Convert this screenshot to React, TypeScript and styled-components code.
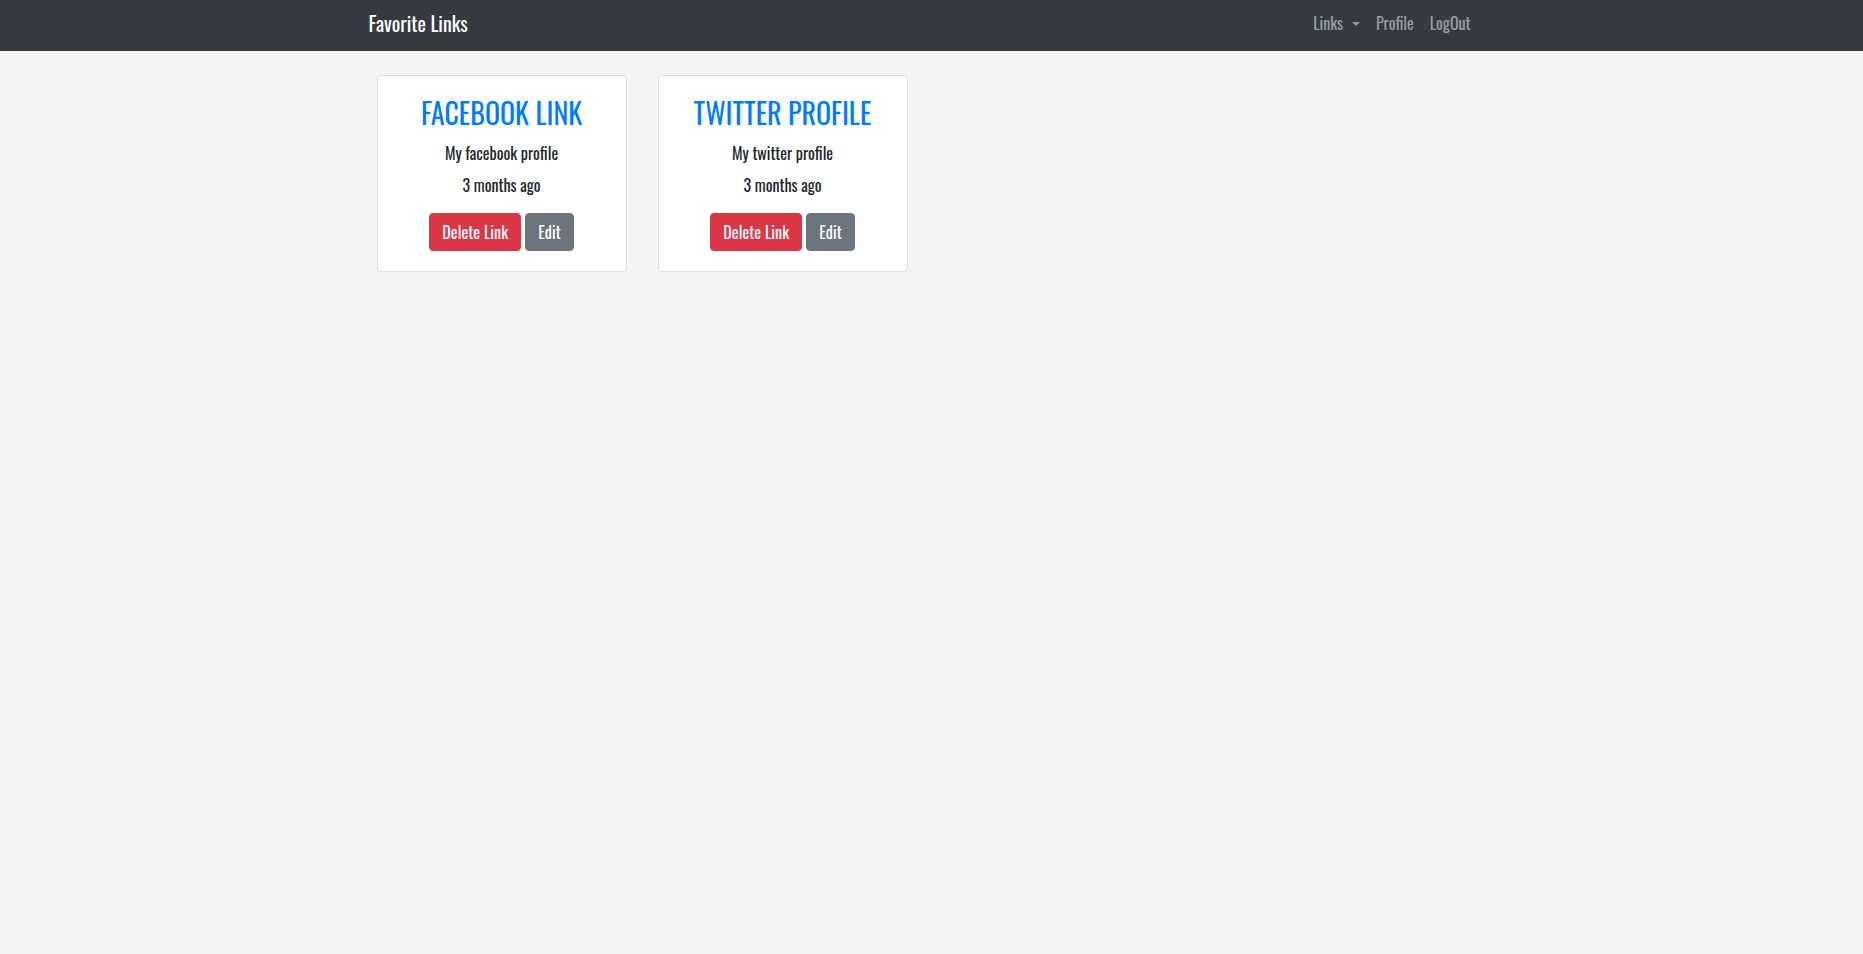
import React from "react";
import styled, { createGlobalStyle } from "styled-components";

const Global = createGlobalStyle`
  *, *::before, *::after { box-sizing: border-box; }
  body {
    margin: 0;
    background: #f5f5f5;
    font-family: Oswald, "Liberation Sans Narrow", "DejaVu Sans Condensed", sans-serif;
    font-size: 16px;
    line-height: 1.5;
    color: #212529;
  }
`;

const Navbar = styled.nav`
  height: 51px;
  background: #343a40;
  display: flex;
  align-items: center;
`;

const NavInner = styled.div`
  width: 1140px;
  margin: 0 auto;
  padding: 0 23px 0 7px;
  display: flex;
  align-items: center;
  justify-content: space-between;
`;

const Brand = styled.a`
  font-size: 20px;
  line-height: 30px;
  color: #fff;
  text-decoration: none;
  margin-top: -5px;
`;

const NavList = styled.ul`
  list-style: none;
  margin: -5px 0 0;
  padding: 0;
  display: flex;
  align-items: center;
`;

const NavLink = styled.a<{ $dropdown?: boolean }>`
  display: block;
  padding: 0 8px;
  font-size: 16px;
  line-height: 24px;
  color: rgba(255, 255, 255, 0.5);
  text-decoration: none;
  white-space: nowrap;
  ${(p) =>
    p.$dropdown &&
    `
    &::after {
      content: "";
      display: inline-block;
      margin-left: 9px;
      vertical-align: 0.255em;
      border-top: 0.3em solid;
      border-right: 0.3em solid transparent;
      border-left: 0.3em solid transparent;
      border-bottom: 0;
    }
  `}
`;

const Main = styled.main`
  width: 1140px;
  margin: 0 auto;
  padding: 24px 15px;
`;

const CardRow = styled.div`
  display: flex;
  gap: 31px;
  align-items: flex-start;
`;

const Card = styled.div`
  width: 250px;
  background: #fff;
  border: 1px solid rgba(0, 0, 0, 0.125);
  border-radius: 4px;
  padding: 20px;
  text-align: center;
  display: flex;
  flex-direction: column;
  align-items: center;
`;

const Title = styled.h3`
  margin: 0 0 11px;
  font-size: 28px;
  font-weight: 400;
  line-height: 1.2;
  color: #007bff;
  text-transform: uppercase;
`;

const Line = styled.p<{ $gap: number }>`
  margin: 0 0 ${(p) => p.$gap}px;
  font-size: 16px;
  line-height: 24px;
  color: #212529;
`;

const Actions = styled.div`
  display: flex;
  gap: 4px;
  justify-content: center;
`;

const Button = styled.button<{ $variant: "danger" | "secondary" }>`
  height: 38px;
  padding: 6px 12px;
  border: 1px solid ${(p) => (p.$variant === "danger" ? "#dc3545" : "#6c757d")};
  background: ${(p) => (p.$variant === "danger" ? "#dc3545" : "#6c757d")};
  color: #fff;
  border-radius: 4px;
  font-family: inherit;
  font-size: 16px;
  font-weight: 400;
  line-height: 24px;
  letter-spacing: 0.1px;
  cursor: pointer;
`;

const links = [
  { title: "Facebook Link", description: "My facebook profile", time: "3 months ago" },
  { title: "Twitter Profile", description: "My twitter profile", time: "3 months ago" },
];

export default function App() {
  return (
    <>
      <Global />
      <Navbar>
        <NavInner>
          <Brand href="#">Favorite Links</Brand>
          <NavList>
            <li>
              <NavLink href="#" $dropdown>
                Links
              </NavLink>
            </li>
            <li>
              <NavLink href="#">Profile</NavLink>
            </li>
            <li>
              <NavLink href="#">LogOut</NavLink>
            </li>
          </NavList>
        </NavInner>
      </Navbar>
      <Main>
        <CardRow>
          {links.map((l) => (
            <Card key={l.title}>
              <Title>{l.title}</Title>
              <Line $gap={8}>{l.description}</Line>
              <Line $gap={16}>{l.time}</Line>
              <Actions>
                <Button $variant="danger">Delete Link</Button>
                <Button $variant="secondary">Edit</Button>
              </Actions>
            </Card>
          ))}
        </CardRow>
      </Main>
    </>
  );
}
